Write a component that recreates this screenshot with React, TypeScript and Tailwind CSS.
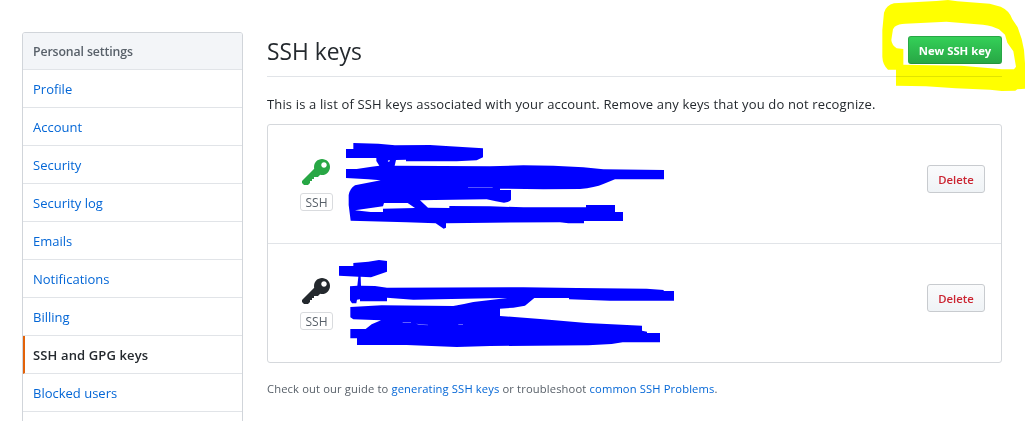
const links = [
  'Profile',
  'Account',
  'Security',
  'Security log',
  'Emails',
  'Notifications',
  'Billing',
  'SSH and GPG keys',
  'Blocked users',
];

function KeyIcon({ className }: { className: string }) {
  return (
    <svg viewBox="0 0 14 16" className={`mr-px h-8 w-7 ${className}`} fill="currentColor" aria-hidden="true">
      <path
        fillRule="evenodd"
        d="M12.83 2.17C12.08 1.42 11.14 1.03 10 1c-1.13.03-2.08.42-2.83 1.17S6.04 3.86 6.01 5c0 .3.03.59.09.89L0 12v1l1 1h2l1-1v-1h1v-1h1v-1h2l1.09-1.11c.3.08.59.11.91.11 1.14-.03 2.08-.42 2.83-1.17S13.97 6.14 14 5c-.03-1.14-.42-2.08-1.17-2.83zM11 5.38c-.77 0-1.38-.61-1.38-1.38 0-.77.61-1.38 1.38-1.38.77 0 1.38.61 1.38 1.38 0 .77-.61 1.38-1.38 1.38z"
      />
    </svg>
  );
}

function KeyRow({ iconClass, rowClass }: { iconClass: string; rowClass: string }) {
  return (
    <li className={`flex items-start justify-between pr-4 pl-8 ${rowClass}`}>
      <div className="flex w-[33px] flex-col items-center">
        <KeyIcon className={iconClass} />
        <span className="mt-1 flex h-[18px] w-[33px] items-center justify-center rounded-[3px] border border-[#d9dbde] pt-[2px] text-[12px] text-[#586069]">
          SSH
        </span>
      </div>
      <button className="mt-2 h-7 w-[58px] rounded-[3px] border border-[#c8cbcf] bg-linear-to-b from-[#fafbfc] to-[#eff3f6] pt-[2px] text-[11.3px] font-semibold text-[#cb2431]">
        Delete
      </button>
    </li>
  );
}

function Marker() {
  return (
    <svg
      className="pointer-events-none absolute top-0 left-0 h-[421px] w-[1028px] mix-blend-multiply"
      viewBox="0 0 1028 421"
      aria-hidden="true"
    >
      <path
        fill="#ffff00"
        fillRule="evenodd"
        transform="translate(868 0) scale(.33333)"
        d="M48 38Q55 15 78 10L205 3L240 0L268 4L365 11L398 20Q425 32 433 58L449 82L461 117L468 150L471 190V266L448 268L442 272L401 273L366 269L263 265L174 259L84 257V209H60Q44 194 43 170V90ZM80 80Q92 71 112 71L235 65L345 74Q375 78 393 88L411 104L418 128L436 154L444 200L438 208H402L350 203L280 197L106 194V147L86 145Q71 135 70 120Q73 100 75 88Z"
      />
      <g fill="#0000ff">
        <path
          transform="translate(290 135) scale(.33333)"
          d="M190 24L265 26L315 31L420 30L480 34L579 40V67L560 76L500 79H348V74L318 75L314 92L600 94L700 91L790 92L880 97L940 103L1122 105V133H975L940 147Q915 158 870 162L760 163L630 161V165H663V194Q660 201 642 203L618 199L590 193L435 195L390 196L414 218L478 219V213L600 214L700 217H888V210H975V231H999V258H882V265H835L810 262L600 263L468 265V278L461 281L437 265L350 262L182 257L176 210V180Q180 160 195 151L272 136L235 133L168 129V102H200L245 95L268 92L259 78V69H168V42H190ZM195 226L242 231L279 231V221L375 219L353 204H282L279 214Z"
        />
        <path fill="#fff" transform="translate(290 135) scale(.33333)" d="M293 78L296 76L300 76L297 81Z" />
        <path fill="#8080ff" transform="translate(290 135) scale(.33333)" d="M534 156H608V158H534Z" />
        <path
          transform="translate(290 255) scale(.33333)"
          d="M147 33H190V24L235 20L267 15L291 18V50L243 67L212 65L213 92L255 93L291 98L700 97L860 99L1070 101L1121 105V108H1152V137H960L837 133V129H733L705 152L670 158L630 161V183L760 193L890 204L1056 212V227L1071 230V234H1110V262H998L965 267L895 271L600 273L500 276L350 270H201V250H181V222H227L245 208L273 196L190 193L181 187V156L275 151L415 152L490 153Q520 148 550 141L652 129L600 130L370 134L310 130L291 128V139H210V133L201 134L199 145H186L180 136V94L202 92L205 65L147 62Z"
        />
        <path fill="#8080ff" transform="translate(290 255) scale(.33333)" d="M338 202H363V204H338ZM378 206L414 209V211L386 209ZM505 208H519V210H505Z" />
      </g>
    </svg>
  );
}

export default function App() {
  return (
    <div className="relative isolate flex h-[421px] w-[1028px] items-start overflow-hidden bg-white pt-8 pl-[22px] font-['Open_Sans',sans-serif] text-[13px] text-[#24292e]">
      <nav className="h-[430px] w-[221px] shrink-0 rounded-[3px] border border-[#d1d5da]">
        <h2 className="flex h-[37px] items-center rounded-t-[2px] border-b border-[#e1e4e8] bg-[#f3f5f8] px-[10px] pt-[2px] text-[12.3px] font-semibold tracking-[-0.01em] text-[#586069]">
          Personal settings
        </h2>
        {links.map((label) =>
          label === 'SSH and GPG keys' ? (
            <a
              key={label}
              className="flex h-[38px] items-center border-b border-l-2 border-b-[#e1e4e8] border-l-[#e36209] pt-[2px] pl-2 text-[13px] font-semibold tracking-[0.01em]"
            >
              {label}
            </a>
          ) : (
            <a key={label} className="flex h-[38px] items-center border-b border-[#e1e4e8] pt-[2px] pl-[10px] text-[#0366d6]">
              {label}
            </a>
          ),
        )}
      </nav>
      <main className="ml-6 w-[735px] shrink-0">
        <header className="flex h-[45px] items-start justify-between border-b border-[#e1e4e8]">
          <h1 className="text-[22.8px] leading-10">SSH keys</h1>
          <button className="mt-1 h-7 w-[94px] rounded-[3px] border border-[#28a745] border-b-[#23933d] bg-linear-to-b from-[#34d058] to-[#28a745] pt-[2px] text-[11.3px] font-bold whitespace-nowrap text-white">
            New SSH key
          </button>
        </header>
        <p className="mt-[17px] h-[30px] leading-5 tracking-[0.15px] whitespace-nowrap">
          This is a list of SSH keys associated with your account. Remove any keys that you do not recognize.
        </p>
        <ul className="h-[239px] rounded-[3px] border border-[#d5d8dc]">
          <KeyRow iconClass="text-[#28a745]" rowClass="h-[119px] border-b border-[#e1e4e8] pt-8" />
          <KeyRow iconClass="text-[#24292e]" rowClass="h-[118px] pt-8" />
        </ul>
        <p className="mt-4 text-[11.2px] leading-5 tracking-[0.135px] whitespace-nowrap text-[#586069]">
          Check out our guide to <a className="text-[#0366d6]">generating SSH keys</a> or troubleshoot{' '}
          <a className="text-[#0366d6]">common SSH Problems</a>.
        </p>
      </main>
      <Marker />
    </div>
  );
}
